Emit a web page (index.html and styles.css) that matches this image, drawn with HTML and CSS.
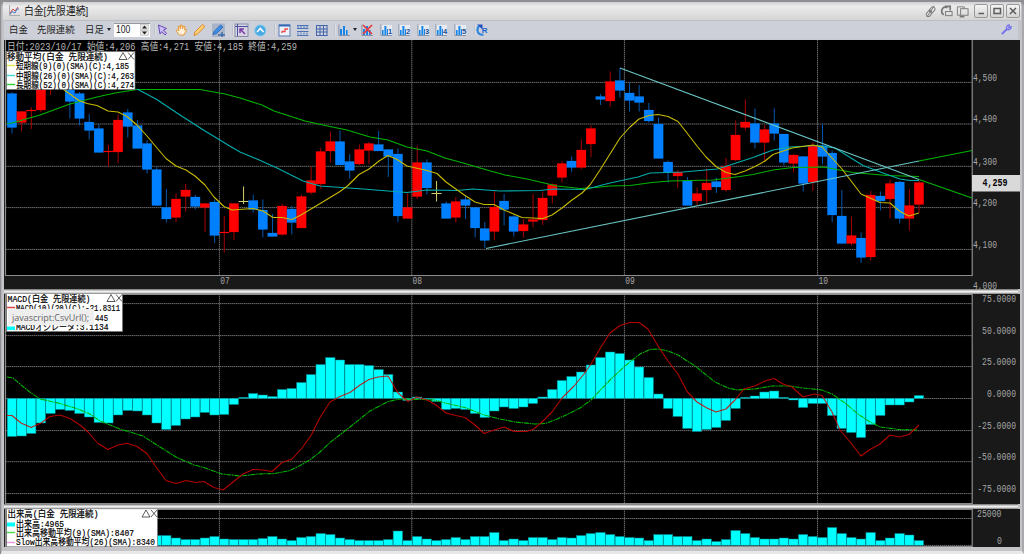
FILE: index.html
```html
<!DOCTYPE html>
<html lang="ja">
<head>
<meta charset="utf-8">
<title>白金[先限連続]</title>
<link rel="stylesheet" href="styles.css">
</head>
<body>
<div class="window">
  <header class="titlebar">
    <svg class="app-icon" viewBox="0 0 12 12"><path class="ax" d="M1.5 0V10.5H12"/><path class="up" d="M2 8L5 4L7 6L10 2"/><path class="dn" d="M2 9.5L4 6.5L7 8L9 4L11 4"/></svg>
    <h1><span>白金[先限連続]</span></h1>
    <svg class="tool" viewBox="0 0 14 14"><g transform="rotate(-50 7 7)"><rect x="1" y="5" width="7" height="4.5" rx="2"/><rect x="6" y="5" width="7" height="4.5" rx="2"/></g><path d="M3 13L11 1"/></svg>
    <svg class="tool" viewBox="0 0 14 14"><path class="thick" d="M8 3C2 0 0 8 4 10.5M5 1.5H11V6"/><rect x="6" y="7" width="7" height="4.5"/></svg>
    <svg class="tool" viewBox="0 0 14 14"><path d="M5 11H1.500V2H9V4"/><rect x="5" y="4" width="8" height="7"/><path class="thick" d="M4 12.5H9"/></svg>
    <div class="winbtns">
      <button><svg viewBox="0 0 14 14"><path d="M4.5 9.5H10"/></svg></button>
      <button><svg viewBox="0 0 14 14"><rect x="4" y="4.5" width="6.5" height="5"/></svg></button>
      <button><svg viewBox="0 0 14 14"><path d="M4 4L10 10M10 4L4 10"/></svg></button>
    </div>
  </header>

  <svg class="defs"><defs>
    <symbol id="bars" viewBox="0 0 18.6 18"><path fill="none" stroke="#8591a5" d="M3.9 3.5V14.5H15"/><path fill="#1685e8" d="M5 8h2v6H5zM8 5h2v9H8zM11 9h1.6v5H11z"/></symbol>
    <symbol id="minibars" viewBox="0 0 18.6 18"><path fill="#e6eaf1" d="M3.500 4H15V14.500H3.500z"/><path fill="none" stroke="#8591a5" d="M3.9 3.5V14.5H15"/><path fill="#1685e8" d="M5 9h1.600v5H5zM7.400 5h2v9H7.400zM10 8h1v6H10z"/></symbol>
  </defs></svg>

  <nav class="toolbar">
    <span class="word w1">白金</span><span class="word w2">先限連続</span><span class="word w3">日足</span><i class="caret"></i>
    <div class="spin"><span>100</span><svg viewBox="0 0 9 12"><rect x=".5" y=".5" width="8" height="5"/><rect x=".5" y="6.500" width="8" height="5"/><path d="M2 4.500L4.500 1.500L7 4.500zM2 7.500L4.500 10.500L7 7.500z"/></svg></div>
    <i class="sep s1"></i>
    <div class="icons">
      <svg viewBox="0 0 18.6 18"><path fill="#cdbff5" stroke="#6545b5" d="M5.500 4L13.500 7.500L10.500 9L13.500 12.500L12 14L8.800 10.600L7 13z"/></svg>
      <svg viewBox="0 0 18.6 18"><path fill="#fff0d8" stroke="#e59a38" d="M7 13.500L4 9.500L5.500 8.800L7 10L6 5.500L7.500 5L8.500 8L8.600 4H10L10.500 8L11.500 5L13 5.500L12.600 9L14 8L14.500 9L12 14H7.500z"/></svg>
      <svg viewBox="0 0 18.6 18"><path fill="#ffd079" stroke="#d98b26" d="M4 14.500L5 11L12.500 3.500L15 5.500L7.500 13z"/></svg>
      <svg viewBox="0 0 18.6 18"><rect fill="#a9b5c9" x="3" y="2.500" width="13" height="13.500"/><path fill="#3b8fe8" stroke="#1b56a8" stroke-width=".7" d="M4 13.500L5 10.500L11.500 4L14 6L7.500 12.500z"/><path stroke="#174f9c" d="M9 14H16M13 11V16"/></svg>
    </div>
    <i class="sep s2"></i>
    <div class="icons">
      <svg viewBox="0 0 18.6 18"><rect fill="#d6d4e4" stroke="#8b8da5" x="3" y="3" width="13" height="12.500"/><path fill="none" stroke="#47509c" d="M5.500 3V15M3 5.500H16"/><path stroke="#7a3ba5" stroke-width="1.500" fill="none" d="M13 13L8.500 8.500M8 12V8H12"/></svg>
      <svg viewBox="0 0 18.6 18"><circle cx="9.300" cy="9.500" r="5.500" fill="#4aa9e2" stroke="#7cc7ed"/><path fill="none" stroke="#fff" stroke-width="1.600" d="M6 11L9.300 7.500L12.600 11"/></svg>
    </div>
    <i class="sep s3"></i>
    <div class="icons">
      <svg viewBox="0 0 18.6 18"><rect x="4" y="4" width="11" height="11" fill="#eef3fb" stroke="#5b7ab5"/><path stroke="#3568b4" stroke-width="2" d="M4 4.500H15"/><path fill="none" stroke="#ef4b4b" stroke-width="1.300" d="M7 12V10.500H10V8H13"/></svg>
      <svg viewBox="0 0 18.6 18"><path fill="none" stroke="#4a72b5" d="M4 4.500H15.500M4 7.500H15.500M4 10.500H15.500M4 14.500H15.500"/><path stroke="#88a4cf" stroke-dasharray="2 1" stroke-width="2" d="M4 12.500H15.500M4 6H15.500"/></svg>
      <svg viewBox="0 0 18.6 18"><path fill="none" stroke="#4365ad" d="M4 4.500H15.500M4 8H15.500M4 11H15.500M4 14.500H15.500M4.500 4V15M8 4V15M11.500 4V15M15 4V15"/></svg>
    </div>
    <i class="sep s3"></i>
    <div class="icons">
      <svg><use href="#bars"/></svg>
    </div>
    <i class="caret small"></i>
    <div class="icons">
      <svg viewBox="0 0 18.6 18"><use href="#bars" width="18.6" height="18"/><path stroke="#e8383c" stroke-width="1.700" d="M5 4L14 13M14 4L5 13"/></svg>
      <svg viewBox="0 0 18.6 18"><use href="#minibars" width="18.6" height="18"/><text x="11" y="13.500">1</text></svg>
      <svg viewBox="0 0 18.6 18"><use href="#minibars" width="18.6" height="18"/><text x="11" y="13.500">2</text></svg>
      <svg viewBox="0 0 18.6 18"><use href="#minibars" width="18.6" height="18"/><text x="11" y="13.500">3</text></svg>
      <svg viewBox="0 0 18.6 18"><use href="#minibars" width="18.6" height="18"/><text x="11" y="13.500">4</text></svg>
      <svg viewBox="0 0 18.6 18"><use href="#minibars" width="18.6" height="18"/><text x="11" y="13.500">5</text></svg>
    </div>
    <i class="sep s3"></i>
    <div class="icons last">
      <svg viewBox="0 0 18.6 18"><path fill="none" stroke="#2a85dd" stroke-width="2" d="M6 5C2.500 9 5 14.500 10.500 13.800"/><path fill="#1e50c0" d="M4 3.500H9.500V8.500z"/><text class="r" x="8.800" y="12.500">R</text></svg>
    </div>
    <svg class="wrench" viewBox="0 0 14 14"><path fill="none" stroke="#7774ee" stroke-width="2.200" d="M2 12L7.500 6.500"/><path fill="none" stroke="#7774ee" stroke-width="1.500" d="M10 2C7 2 6.500 5 7.500 6.500C9 8 12 7 12 4L9.500 5z"/></svg>
  </nav>

  <svg class="panel price" viewBox="4 40 1016 249" id="price"></svg>
  <div class="divider d1"></div>
  <svg class="panel macd" viewBox="4 294 1016 210" id="macd"></svg>
  <div class="divider d2"></div>
  <svg class="panel volume" viewBox="4 509 1016 38" id="volume"></svg>
</div>
<script src="chart.js"></script>
</body>
</html>
```

FILE: styles.css
```css
* { box-sizing: border-box; }
body {
  margin: 0;
  width: 1024px;
  height: 554px;
  overflow: hidden;
  background: #8d8f92;
  font-family: "Liberation Sans", "Noto Sans CJK JP", sans-serif;
}
.window {
  display: flex;
  flex-direction: column;
  height: 552px;
  margin: 2px 0 0 1px;
  padding: 0 4px 0 2px;
  background: #c4c4c8;
  border-left: 1px solid #b5b5b5;
  border-right: 2px solid #a9a8ad;
  border-bottom: 3px solid #e8e8e8;
  border-radius: 5px 5px 0 0;
}
.titlebar {
  display: flex;
  align-items: center;
  flex: none;
  height: 18px;
  margin: 0 -3px 0 -1px;
  padding: 0 1px 0 5px;
  background: linear-gradient(#d0d0d0, #ececec 25%, #dfdfdf 65%, #d5d5d5);
}
.titlebar h1 {
  flex: 1;
  margin: 0 0 0 4px;
  font-size: 11.8px;
  font-weight: 400;
  line-height: 18px;
  color: #222;
}
.titlebar h1 span { display: inline-block; transform: scaleX(.83); transform-origin: left; }
.app-icon { width: 12px; height: 12px; fill: none; }
.app-icon .ax { stroke: #aaa; }
.app-icon .up { stroke: #e34545; }
.app-icon .dn { stroke: #3c78c8; }
.tool { width: 13px; height: 13px; margin-right: 3px; fill: none; stroke: #777; }
.tool .thick { stroke-width: 1.8; }
.winbtns { display: flex; gap: 2px; margin-left: 2px; }
.winbtns button {
  width: 14px;
  height: 14px;
  padding: 0;
  border: 1px solid #999;
  border-radius: 2px;
  background: linear-gradient(#f5f5f5, #d2d2d2);
}
.winbtns svg { display: block; margin: -1px; width: 14px; height: 14px; fill: none; stroke: #5c5c5c; stroke-width: 1.5; }

.defs { display: none; }
.toolbar {
  display: flex;
  align-items: center;
  flex: none;
  height: 20px;
  padding-left: 5px;
  border-top: 1px solid #bcbec3;
  border-bottom: 2px solid #c9ccd3;
  background: #cdd0d8;
  font-size: 9.4px;
  color: #222;
}
.word { flex: none; white-space: nowrap; line-height: 16px; }
.w1 { width: 28px; }
.w2 { width: 48px; }
.w3 { width: 22px; }
.caret { border: 2.5px solid transparent; border-top: 3px solid #222; border-bottom: 0; }
.caret.small { margin: 0 1px 0 -1px; }
.spin {
  display: flex;
  align-items: center;
  justify-content: space-between;
  width: 36px;
  height: 14px;
  margin-left: 3px;
  padding: 0 1px 0 2px;
  background: #fff;
  border-top: 1px solid #999;
  font: 8.6px "Liberation Sans", sans-serif;
}
.spin span { transform: translateY(-1px) scaleY(1.2); }
.spin svg { width: 9px; height: 12px; fill: #e6e6e6; stroke: #bbb; stroke-width: .6; }
.spin path { fill: #222; stroke: none; }
.sep { width: 2px; height: 11px; background: #dedfe4; border-left: 1px solid #c0c3cb; }
.s1 { margin: 0 -3px 0 4px; }
.s2 { margin: 0 -2px 0 5px; }
.s3 { margin: 0 -1px 0 4px; }
.icons { display: flex; }
.icons svg { width: 18.6px; height: 18px; display: block; }
.icons text { font: bold 7.5px "Liberation Sans", sans-serif; fill: #214d94; }
.icons .r { font-size: 8px; fill: #1b63d0; }
.icons.last { margin-left: -2px; }
.wrench { width: 13px; height: 13px; margin: 0 5px 0 auto; }

.panel { display: block; flex: none; width: 1016px; }
.price { height: 249px; }
.macd { height: 210px; }
.volume { height: 38px; }
.divider {
  flex: none;
  height: 5px;
  background: linear-gradient(#888 0 1px, #c4c4c4 1px 2px, #eee 2px 3px, #d4d4d4 3px 4px, #999 4px);
}

.side { fill: #191919; }
.plot { fill: #000; }
.frame { fill: none; stroke: #8c8c8c; stroke-width: 1.2; }
.grid { fill: none; stroke: #6a6a6a; stroke-width: 1; stroke-dasharray: 1.5 .5; }
.label { font-family: "Liberation Mono", "Noto Sans CJK JP", monospace; fill: #a5a5a5; font-size: 11px; }
.info { fill: #b8b8b8; font-size: 10.5px; }
.legend { fill: #000; font-size: 9.6px; stroke: #000; stroke-width: .2; }
.now { fill: #000; font-weight: bold; }
.status { font: 9px "Open Sans", "Noto Sans", sans-serif; fill: #666; }
.box { fill: #fff; stroke: #777; stroke-width: .7; }
.swatch { stroke-width: 1.4; }
.mark { fill: none; stroke: #333; stroke-width: .8; }
.blue { fill: #0080ff; stroke: #0080ff; }
.red { fill: #f00; stroke: #f00; }
.wick-blue { stroke: #0058b0; }
.wick-red { stroke: #a80000; }
.cross { stroke: #d6cf6a; fill: none; }
.bar { fill: #0ff; stroke: #007f86; stroke-width: .5; }
.line { fill: none; stroke-width: 1.1; stroke-linejoin: round; }
.yellow { stroke: #c8ba00; }
.teal { stroke: #00adad; }
.green { stroke: #00b400; }
.trend { stroke: #69c4c4; }
.macdline { stroke: #d40000; }
.signal { stroke: #00b400; stroke-dasharray: 5 .8 1.5 .8; }
.over { stroke-opacity: .85; }
```

FILE: chart.js
```js
const STEP = 9.649, X0 = 12;
const MONTHS = [[219.4, '07'], [411.8, '08'], [624.4, '09'], [817.6, '10']];

// Each candle: kind (b = down, r = up, x = unchanged), high, body top, body bottom, low
const candles = `b 92 93.5 127.5 133.5|r 111 111.5 122.5 131|r 107 110 111 129|r 84 85 110 112|r 84 84 85 95|b 80 82 86 86|b 84 85 101.5 118.5|b 92 93.5 118.5 125.5|b 114 122 130.5 139.5|b 124 128.5 152.5 152.5|r 144.5 151 152 166.5|r 114.5 120 152 163|b 109 112.5 126.5 137.5|b 120 125.5 148.5 148.5|b 140 143.5 169.5 173.5|b 166.5 169.5 205.5 206|b 189 207.5 219 222.5|r 193.5 199 217.5 222|r 184 190 196.5 211.5|b 195 197 206.5 209.5|r 203 203.5 207.5 232|b 199.5 202 235.5 243|r 216 232 233 252.5|r 203 203.5 232 240|x 186.5 201.5 201.5 204|b 194.5 200.5 209.5 212.5|b 199.5 210 229.5 237.5|b 214 233 236.5 236.5|r 203.5 206 234.5 235.5|b 206 209 222.5 234.5|r 194.5 196.5 228 228|r 166.5 180.5 192.5 194.5|r 147.5 151.5 184 189|r 131.5 141.5 151 162.5|b 130.5 141.5 165 165|b 154 161.5 170.5 178.5|r 144.5 149.5 164 165|r 142 143.5 150.5 164|b 131 144.5 151 151|b 149 149.5 156.5 177|b 148.5 154 216 222|r 193.5 207.5 218.5 218.5|r 146 162.5 196.5 199|b 159.5 162.5 188 194.5|x 181 193.5 193.5 201.5|b 201.5 203.5 218.5 218.5|r 197 201.5 217.5 222.5|b 195 199.5 205.5 219|b 207 207.5 228 237.5|b 222 228.5 240.5 248|r 191 207 231.5 240|b 194 201 209.5 225.5|b 215 216.5 231.5 236.5|r 219 224.5 231 237.5|r 194 219.5 221.5 227.5|r 191.5 198 220 225|r 183.5 184.5 195.5 203.5|r 161 163.5 177.5 182.5|b 156.5 161 167.5 172|r 139.5 150 167.5 169.5|r 125.5 128.5 144 157|b 94 96.5 99.5 105|r 71.5 81.5 101 106.5|b 68 80.5 90.5 97.5|b 82.5 93 100.5 111.5|b 85 96.5 102.5 111.5|b 103 110 121 122.5|b 117.5 124 158.5 158.5|b 160.5 162 172 182.5|r 170 172 176 188|b 177 181 205.5 205.5|r 187.5 193.5 201 205.5|r 168.5 183 190 203.5|b 177.5 181.5 187 193|r 158 166 190 191.5|r 120.5 135 160 161|r 99.5 122 127.5 130.5|b 108.5 123.5 142.5 148.5|r 125.5 129.5 142.5 161.5|b 108.5 123.5 133.5 140.5|b 134 134 162.5 165.5|r 154 155 163.5 172.5|b 156 156.5 183.5 191.5|r 142.5 145.5 182 191|b 124 145.5 156.5 164|b 150.5 153 215 222|b 190 216 243.5 243.5|r 216.5 235.5 243.5 245.5|b 232.5 238 257.5 263|r 191 195 257 260.5|b 191.5 196 201 210.5|r 179.5 183.5 199 218.5|b 181 182 218.5 223.5|r 189 205.5 218.5 230.5|r 181 182.5 204.5 213`.split('|').map(s => s.split(' '));

const oscillator = [436.5,436,433.5,423,413.5,409.5,410.5,413.5,417,422.5,423,415,410.5,411,415,423,429.5,425.5,419,417,412.5,415,414.5,404.5,397.3,393.5,395,396.5,389.5,388.5,382.5,374.5,364.5,357.5,360,364.5,364.5,365.5,369.5,374.5,392,400.5,397,399.3,401.5,409.5,408.5,409.5,413.5,417.5,411,407,408.5,407,403.5,397,389.5,380.5,376.5,372,365,357.5,352,353.5,360,367,377.5,394,408.5,416.5,428.5,431.5,429.5,427.5,420.5,408.5,397.3,396,392,391,397.3,400,407.5,403.5,403.5,415.5,428.5,432.5,437.5,424.5,415.5,405,405,402,395.5];
const volumes = [535.5,535.5,538,539.5,539.5,538,536.5,539,539.5,539.5,539.5,538.5,536.5,539,540.5,537.5,536.5,533.5,534.5,538,539.5,540.5,540.5,540.5,539.5,531,540.5,536.5,539,540.5,539.5,537.5,539.5,536.5,536.5,532.5,540.5,539,540.5,537.5,537.5,539.5,537.5,538,535.5,533.5,532.5,534.5,536.5,537.5,538,540.5,534.5,534.5,536.5,536.5,540.5,539,541.5,539.5,530.5,533.5,537.5,539,539,538,539,534.5,536.5,537.5,527.5,533.5,537.5,539,532.5,540.5,538,533.5,535,540.5];

const x = i => X0 + STEP * i;
const rect = (c, x, y, w, h) => `<rect class="${c}" x="${x}" y="${y}" width="${w}" height="${h}"/>`;
const path = (c, d) => `<path class="${c}" d="${d}"/>`;
const line = (c, pts) => `<polyline class="line ${c}" points="${pts}"/>`;
const text = (c, x, y, w, s) => `<text class="label ${c}" x="${x}" y="${y}" textLength="${w}" lengthAdjust="spacingAndGlyphs" xml:space="preserve">${s}</text>`;
const grid = (ys, top, bottom) => path('grid', ys.map(y => `M6 ${y}H972`).join('') + MONTHS.map(m => `M${m[0]} ${top}V${bottom}`).join(''));
const swatch = (y, colour) => `<path class="swatch" d="M7 ${y}H15" stroke="${colour}"/>`;
const controls = (x, y) => path('mark', `M${x} ${y + 7}L${x + 4} ${y}L${x + 8} ${y + 7}ZM${x + 9} ${y}L${x + 15} ${y + 7}M${x + 15} ${y}L${x + 9} ${y + 7}`);

function candle([kind, hi, top, bottom, lo], i) {
  const cx = x(i), wick = `M${cx} ${hi}V${lo}`;
  if (kind === 'x') return path('cross', `${wick}M${cx - 5} ${top}H${cx + 5}`);
  const name = kind === 'b' ? 'blue' : 'red';
  return path('wick-' + name, wick) + `<rect class="${name}" stroke-width=".2" x="${cx - 4.8}" y="${top}" width="9.5" height="${Math.max(bottom - top, 1)}"/>`;
}

document.getElementById('price').innerHTML =
  rect('side', 4, 40, 1016, 249) + rect('plot', 6, 40, 966, 235) +
  grid([82.4, 124, 166.3, 207.6, 249.4], 40, 275) +
  path('frame', 'M972.2 40V275.500H5.500V40') +
  candles.map(candle).join('') +
  line('green', '7,123.5 12,123 40,115 70,104 97,97 115,93 137,89.5 200,89.5 225,94 240,98 262,105 274,111 305,121 330,126.5 347,130 370,137 388,140 407,147 427,151 445,158 465,163.5 480,168 505,175 527,179 557,186 580,188.5 595,187.5 610,186 630,185.5 652,182.5 670,181 713,180 740,176.5 753,174.5 773,170 793,167.5 823,167 853,172.5 887,175.5 919,176.5') +
  line('teal', '137,89 156,99 180,115 205,131 228,145 240,152 257,159 277,168 303,181 320,186 363,189 407,192.5 427,190 457,190.5 473,189 500,191 540,190.5 553,189 585,189.5 610,183 638,177 650,173 683,172 717,169 730,165 753,157.5 773,150 790,147 817,145.5 835,148 863,165.5 883,173 900,179 910,180.5 919,180.5') +
  line('yellow', '60,87 79,100.5 87,103.5 97,105.5 108,111 118,112 127,116.5 137,125 147,136 157,148 166,158.5 176,166 186,170 195,176 205,185 214,197 224,206.5 232,210 253,208.5 263,211 273,217.5 282,217.5 292,219.5 301,215 321,203 340,191.5 348,185.5 359,174.5 369,169 379,161 388,155.5 397,159.5 407,166 427,170.5 437,173.5 446,182 465,195.5 475,202 484,204.5 494,204.5 504,210 522,217.5 543,218.5 552,215 562,208 572,200 582,193 590,185 600,170 610,154 620,138 630,127 639,119 649,115.5 658,114.5 668,116.5 678,121.5 687,133 697,146 706,157 716,166.5 726,172.5 735,174.5 745,171 755,166.5 765,161 773,154.5 792,148 813,145 822,147 842,169 861,194 880,202.5 890,203 900,211.5 909,216 919,213') +
  line('trend', '486,248.5 919,161') + line('green', '919,161 972,150.5') +
  line('trend', '620,68 919,179.5') + line('green', '919,179.5 972,198') +
  text('info', 7, 49.5, 290, '日付:2023/10/17 始値:4,206 高値:4,271 安値:4,185 終値:4,259') +
  rect('box', 6.5, 51.5, 128.5, 38) +
  text('legend', 7, 59.5, 101, '移動平均(白金 先限連続)') + controls(119, 52.5) +
  swatch(65.5, '#e9e54b') + text('legend', 16, 69, 113, '短期線(9)(0)(SMA)(C):4,185') +
  swatch(75.5, '#3ddada') + text('legend', 16, 78.5, 118, '中期線(26)(0)(SMA)(C):4,263') +
  swatch(84.5, '#27d527') + text('legend', 16, 88, 118, '長期線(52)(0)(SMA)(C):4,274') +
  [[80.5, '4,500'], [122, '4,400'], [164.5, '4,300'], [206, '4,200'], [247.5, '4,100'], [288.8, '4,000']].map(([y, s]) => text('', 973, y, 24, s)).join('') +
  `<rect x="972" y="175" width="48" height="16.5" fill="#d9d9d9"/>` + text('now', 982.5, 186, 25, '4,259') +
  MONTHS.map(([mx, s]) => text('', mx + .8, 284.2, 9.5, s)).join('');

document.getElementById('macd').innerHTML =
  rect('side', 4, 294, 1016, 210) + rect('plot', 6, 294, 966, 209) +
  grid([303.6, 335.6, 366.6, 398.5, 430.6, 461.7, 493.6], 294, 503) +
  oscillator.map((v, i) => rect('bar', x(i) - 4.8, Math.min(v, 398.4), 9.4, Math.abs(v - 398.4))).join('') +
  line('signal', '7,377 13,378 23,386.5 31,393 40,399 60,403.5 78,409 90,414 100,421 120,429 143,436 160,447 176,457 194,465 204,467.5 222,474 240,476 258,474 275,473.5 290,470.5 302,464.5 311,459 320,452 330,442.5 350,427 370,411 388,401.5 400,399 420,399.5 435,400 447,403.5 465,407.5 484,415 500,419 515,422 535,424 545,423.5 555,420 566,415 580,408 591,400 610,380 625,366 640,354 650,349.5 658,349 668,351 678,355 695,366 715,382 728,388 737,390 754,389 772,386 790,386 803,388 822,390 832,394 845,403 858,414 870,422 880,427 899,429.5 917,430') +
  line('macdline over', '7,415.5 12,415.5 21,423 31,427.5 41,423 50,416.5 60,415 70,418.5 80,425 88,432 98,443.5 108,449.5 118,445 127,443.3 137,446.5 147,453.5 156,467 166,480.5 176,483.5 186,480.5 196,482.5 204,481.5 214,487.5 223,490 233,482 243,474 253,469.5 263,470 272,471.5 282,462.5 292,459 302,448 311,435.5 320,417.5 330,402 340,396.5 350,392.5 360,385 369,379.5 378,377 388,376 398,393 408,401.5 417,397 427,400 436,405 446,413 456,415.5 465,417.5 475,425 484,433.5 494,430 504,427 514,431.5 526,431.5 533,429.5 542,422 552,412 562,398 574,386 584,374 591,364 601,347 610,333 620,325.5 630,322.5 639,322.5 648,329 658,346 668,361 678,374 687,391.5 697,402 707,408 716,412 726,409 735,400 744,389 756,385.5 765,381 774,378.5 783,384 792,387 803,397 814,394 822,395.5 832,412 840,430 851,443 861,456 870,449.5 880,444 890,435 899,437 909,434.5 919,425') +
  path('frame', 'M972.2 294V503.500H5.500V294.500H972') +
  rect('box', 6.5, 293.5, 116, 38) +
  text('legend', 7.5, 301.5, 83, 'MACD(白金 先限連続)') + controls(107, 294.5) +
  swatch(307.5, '#e23b3b') + text('legend', 16, 311, 104, 'MACD(10)(20)(C):-21.8311') +
  text('legend', 95, 320.5, 13, '445') +
  `<rect x="7" y="326.500" width="8" height="3.500" fill="#0ff"/>` + text('legend', 16, 330.3, 92.500, 'MACDオシレータ:3.1134') +
  `<rect x="8" y="309" width="86" height="16" rx="1" fill="#eee"/><text class="status" x="12" y="320.500" textLength="77" lengthAdjust="spacingAndGlyphs">javascript:CsvUrl();</text>` +
  [[301.8, '75.0000'], [333.8, '50.0000'], [365, '25.0000'], [397, '0.0000'], [428.8, '-25.0000'], [460, '-50.0000'], [491.8, '-75.0000']].map(([y, s]) => text('', 1016 - s.length * 4.85, y, s.length * 4.85, s)).join('');

document.getElementById('volume').innerHTML =
  rect('side', 4, 509, 1016, 38) + rect('plot', 6, 509, 966, 37) +
  grid([518.5, 545.4], 509, 546) +
  volumes.map((v, i) => rect('bar', x(i + 15) - 4.8, v, 9.4, 545.2 - v)).join('') +
  path('frame', 'M972.2 509V546.500H5.500V509.500H972') +
  rect('box', 6.5, 508.8, 151, 38) +
  text('legend', 7.5, 517.3, 91, '出来高(白金 先限連続)') + controls(142, 510) +
  `<rect x="7" y="522.500" width="8" height="4" fill="#0ff"/>` + text('legend', 16, 526.5, 48, '出来高:4965') +
  swatch(532.5, '#42df42') + text('legend', 16, 536, 118, '出来高移動平均(9)(SMA):8407') +
  swatch(542.5, '#e19ae1') + text('legend', 16, 545.3, 139, 'Slow出来高移動平均(26)(SMA):8340') +
  text('', 977, 516.8, 24.5, '25000') + text('', 997, 543.5, 4.9, '0');
```
